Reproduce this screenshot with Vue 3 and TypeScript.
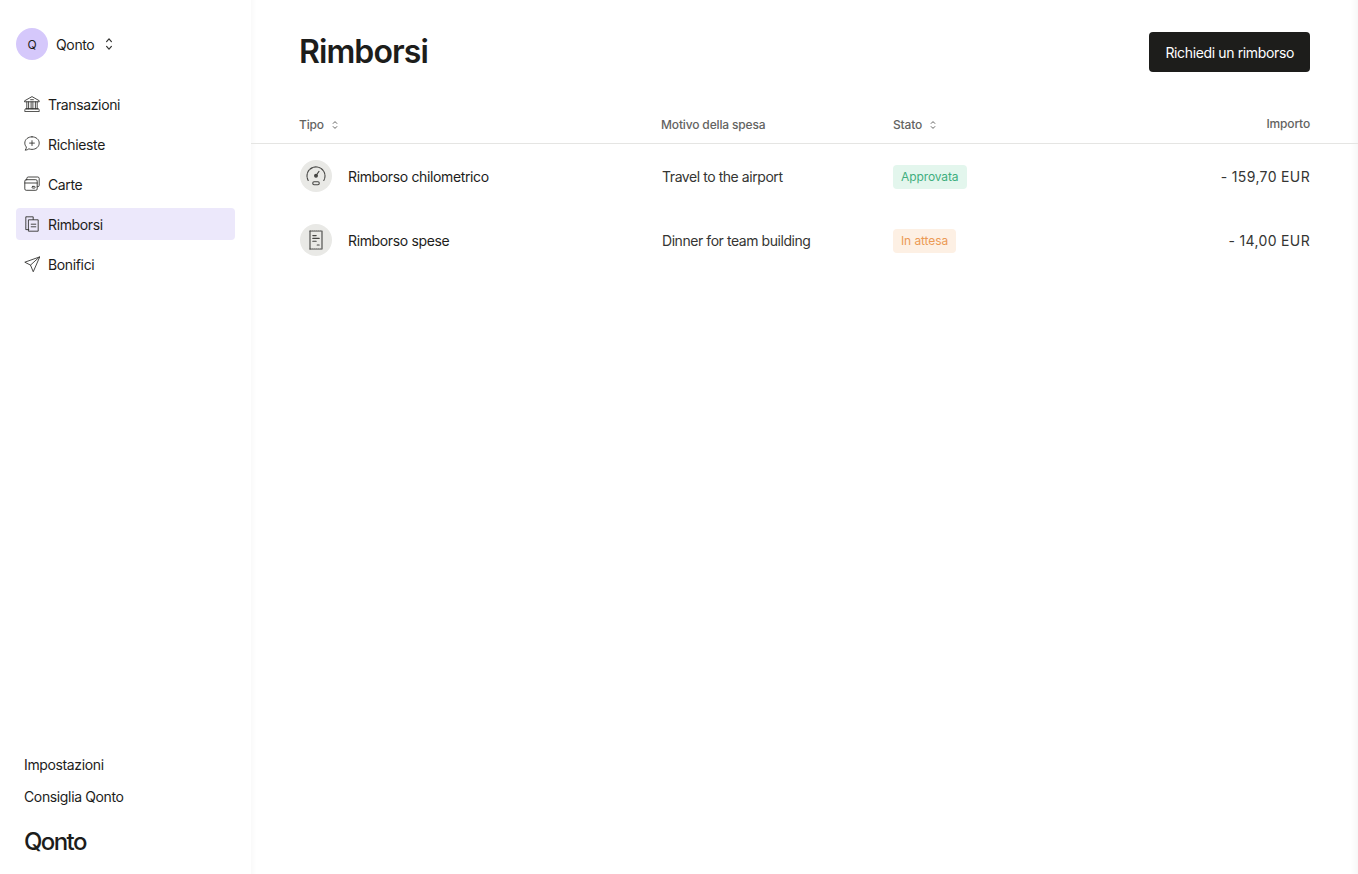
<script setup lang="ts">
interface NavItem {
  label: string
  icon: string
  active?: boolean
}

interface Refund {
  type: string
  icon: string
  reason: string
  status: string
  statusKind: string
  amount: string
}

const navItems: NavItem[] = [
  { label: 'Transazioni', icon: 'bank' },
  { label: 'Richieste', icon: 'request' },
  { label: 'Carte', icon: 'card' },
  { label: 'Rimborsi', icon: 'receipts', active: true },
  { label: 'Bonifici', icon: 'send' }
]

const refunds: Refund[] = [
  {
    type: 'Rimborso chilometrico',
    icon: 'gauge',
    reason: 'Travel to the airport',
    status: 'Approvata',
    statusKind: 'approved',
    amount: '- 159,70 EUR'
  },
  {
    type: 'Rimborso spese',
    icon: 'receipt',
    reason: 'Dinner for team building',
    status: 'In attesa',
    statusKind: 'pending',
    amount: '- 14,00 EUR'
  }
]
</script>

<template>
  <div class="layout">
    <aside class="sidebar">
      <div class="org">
        <span class="org__avatar">Q</span>
        <span class="org__name">Qonto</span>
        <svg class="org__caret" width="12" height="16" viewBox="0 0 12 16" fill="none" stroke="#353533" stroke-width="1.200" stroke-linecap="round" stroke-linejoin="round">
          <path d="M3.600 5.600 6 2.800l2.400 2.800" />
          <path d="M3.600 10.400 6 13.200l2.400-2.800" />
        </svg>
      </div>

      <nav class="nav">
        <a v-for="item in navItems" :key="item.label" class="nav__item" :class="{ 'nav__item--active': item.active }">
          <svg class="nav__icon" width="16" height="16" viewBox="0 0 16 16" fill="none" stroke="#353533" stroke-width="0.900" stroke-linecap="round" stroke-linejoin="round">
            <template v-if="item.icon === 'bank'">
              <path d="M.8 4.700 8 .6l7.200 4.100v1.100H.8z" />
              <path d="M6.600 3.700h2.800" />
              <path d="M2.800 5.800v7M4.600 5.800v7M7.100 5.800v7M8.900 5.800v7M11.400 5.800v7M13.200 5.800v7" />
              <path d="M1.800 12.800h12.400M.8 15.200v-.8c0-.8.500-1.600 1-1.600h12.400c.5 0 1 .8 1 1.600v.8z" />
            </template>
            <template v-else-if="item.icon === 'request'">
              <path d="M8 .8C3.900.8.800 3.500.8 7.100c0 1.500.6 2.800 1.600 3.900-.1 1.200-.5 2.200-1.200 3.200 1.500-.1 2.800-.6 3.700-1.400 1 .4 2 .6 3.100.6 4.100 0 7.200-2.800 7.200-6.300C15.200 3.500 12.100.8 8 .8z" />
              <path d="M8 4.700v4.800M5.600 7.100h4.800" />
            </template>
            <template v-else-if="item.icon === 'card'">
              <path d="M2.800 3.700V2.400c0-.8.600-1.400 1.400-1.400h9.600c.8 0 1.400.6 1.400 1.400v7c0 .8-.6 1.300-1.400 1.300h-.6" />
              <rect x="0.800" y="3.700" width="12.400" height="10.600" rx="1.400" />
              <path d="M.8 7h12.400" />
              <rect x="8" y="10.400" width="3.200" height="1.700" rx="0.800" />
            </template>
            <template v-else-if="item.icon === 'receipts'">
              <path d="M4.800 13.600H1.800V.8h7.400v2.800" stroke-dasharray="1.300 .6" />
              <path d="M4.800 3.800h9.400v11.400H4.800z" />
              <path d="M7.200 8.200h4.600M7.200 10.800h4.600" />
            </template>
            <template v-else>
              <path d="M15.400 1 .8 6.200l5.700 2.900 2.600 6.300z" />
              <path d="M6.500 9.100 15.400 1" />
            </template>
          </svg>
          <span>{{ item.label }}</span>
        </a>
      </nav>

      <div class="sidebar__bottom">
        <a class="sidebar__link">Impostazioni</a>
        <a class="sidebar__link">Consiglia Qonto</a>
        <span class="logo">Qonto</span>
      </div>
    </aside>

    <main class="main">
      <header class="header">
        <h1 class="header__title">Rimborsi</h1>
        <button class="btn" type="button">Richiedi un rimborso</button>
      </header>

      <section class="table">
        <div class="table__row table__row--head">
          <div class="head-cell">
            Tipo
            <svg width="8" height="10" viewBox="0 0 8 10" fill="none" stroke="#636361" stroke-width="1" stroke-linecap="round" stroke-linejoin="round">
              <path d="M2.200 3.400 4 1.600l1.800 1.800M2.200 6.600 4 8.400l1.800-1.800" />
            </svg>
          </div>
          <div class="head-cell">Motivo della spesa</div>
          <div class="head-cell">
            Stato
            <svg width="8" height="10" viewBox="0 0 8 10" fill="none" stroke="#636361" stroke-width="1" stroke-linecap="round" stroke-linejoin="round">
              <path d="M2.200 3.400 4 1.600l1.800 1.800M2.200 6.600 4 8.400l1.800-1.800" />
            </svg>
          </div>
          <div class="head-cell head-cell--right">Importo</div>
        </div>

        <div v-for="refund in refunds" :key="refund.type" class="table__row">
          <div class="type">
            <span class="type__icon">
              <svg v-if="refund.icon === 'gauge'" width="22" height="22" viewBox="0 0 22 22" fill="none" stroke="#454543" stroke-width="1.100" stroke-linecap="round" stroke-linejoin="round">
                <path d="M3.200 15.400A9 9 0 1 1 18.800 15.400" stroke-dasharray="3 1" />
                <path d="M14 6.400 11.600 9.800" />
                <circle cx="11" cy="10.800" r="1.400" fill="#454543" />
                <rect x="7.800" y="16.800" width="6.400" height="3" rx="1.200" />
              </svg>
              <svg v-else width="22" height="22" viewBox="0 0 22 22" fill="none" stroke="#454543" stroke-width="1.100" stroke-linecap="round" stroke-linejoin="round">
                <path d="M5 2v18M17 2v18" />
                <path d="M5 2h12M5 20h12" stroke-dasharray="1.200 .8" />
                <path d="M7.800 6.600h3.400M7.800 9.400h6.400M7.800 12.200h3.400M12.200 16h2" />
              </svg>
            </span>
            <span class="type__label">{{ refund.type }}</span>
          </div>
          <div class="reason">{{ refund.reason }}</div>
          <div class="status">
            <span class="badge" :class="'badge--' + refund.statusKind">{{ refund.status }}</span>
          </div>
          <div class="amount">{{ refund.amount }}</div>
        </div>
      </section>
    </main>
  </div>
</template>

<style>
body {
  background: #fff;
}
</style>

<style scoped>
.layout {
  display: flex;
  height: 874px;
  overflow: hidden;
  font-family: Inter, "Liberation Sans", sans-serif;
  font-size: 14px;
  letter-spacing: -0.36px;
  color: #1d1d1b;
}

.sidebar {
  width: 251px;
  flex-shrink: 0;
  box-sizing: border-box;
  padding: 28px 16px 18px;
  display: flex;
  flex-direction: column;
}

.org {
  display: flex;
  align-items: center;
  height: 32px;
  margin-bottom: 28px;
}

.org__avatar {
  width: 32px;
  height: 32px;
  border-radius: 50%;
  background: #d5c8fb;
  display: flex;
  align-items: center;
  justify-content: center;
  font-size: 12px;
}

.org__name {
  margin-left: 8px;
}

.org__caret {
  margin-left: 9px;
}

.nav {
  display: flex;
  flex-direction: column;
  gap: 8px;
}

.nav__item {
  height: 32px;
  padding: 0 8px;
  border-radius: 4px;
  display: flex;
  align-items: center;
  gap: 8px;
}

.nav__item--active {
  background: #ece8fb;
}

.nav__icon {
  flex-shrink: 0;
}

.sidebar__bottom {
  margin-top: auto;
  padding-left: 8px;
  display: flex;
  flex-direction: column;
}

.sidebar__link {
  height: 32px;
  line-height: 32px;
}

.logo {
  margin-top: 15px;
  font-size: 24px;
  line-height: 28px;
  font-weight: 500;
  letter-spacing: -1.6px;
}

.main {
  flex: 1;
  min-width: 0;
  box-shadow: inset 7px 0 7px -7px rgba(0, 0, 0, 0.05), inset -10px 0 10px -10px rgba(0, 0, 0, 0.07);
}

.header {
  height: 104px;
  box-sizing: border-box;
  padding: 32px 48px 0;
  display: flex;
  justify-content: space-between;
  align-items: flex-start;
}

.header__title {
  margin: 0;
  font-size: 32px;
  line-height: 40px;
  font-weight: 600;
  letter-spacing: -0.9px;
}

.btn {
  height: 40px;
  padding: 0 16px;
  border: 0;
  border-radius: 4px;
  background: #1d1d1b;
  color: #fff;
  font: inherit;
  letter-spacing: inherit;
}

.table__row {
  display: grid;
  grid-template-columns: 362px 232px 1fr 200px;
  align-items: center;
  height: 64px;
  padding: 0 48px;
}

.table__row--head {
  height: 40px;
  box-sizing: border-box;
  padding-top: 2px;
  border-bottom: 1px solid #e5e5e3;
}

.head-cell {
  display: flex;
  align-items: center;
  gap: 7px;
  font-size: 12px;
  font-weight: 500;
  letter-spacing: -0.15px;
  color: #636361;
}

.head-cell--right {
  justify-content: flex-end;
  margin-top: -2px;
}

.type {
  display: flex;
  align-items: center;
  gap: 16px;
  padding-left: 1px;
}

.type__icon {
  width: 32px;
  height: 32px;
  border-radius: 50%;
  background: #e9e9e6;
  display: flex;
  align-items: center;
  justify-content: center;
}

.reason {
  padding-left: 1px;
  letter-spacing: -0.44px;
  color: #353533;
}

.status {
  display: flex;
  padding-top: 2px;
}

.badge {
  height: 24px;
  line-height: 24px;
  padding: 0 8px;
  border-radius: 4px;
  font-size: 12px;
  letter-spacing: -0.1px;
}

.badge--approved {
  background: #e3f6ed;
  color: #3fae7e;
}

.badge--pending {
  background: #fdf0e4;
  color: #ec9a55;
}

.amount {
  text-align: right;
  letter-spacing: 0.35px;
  color: #353533;
}
</style>
